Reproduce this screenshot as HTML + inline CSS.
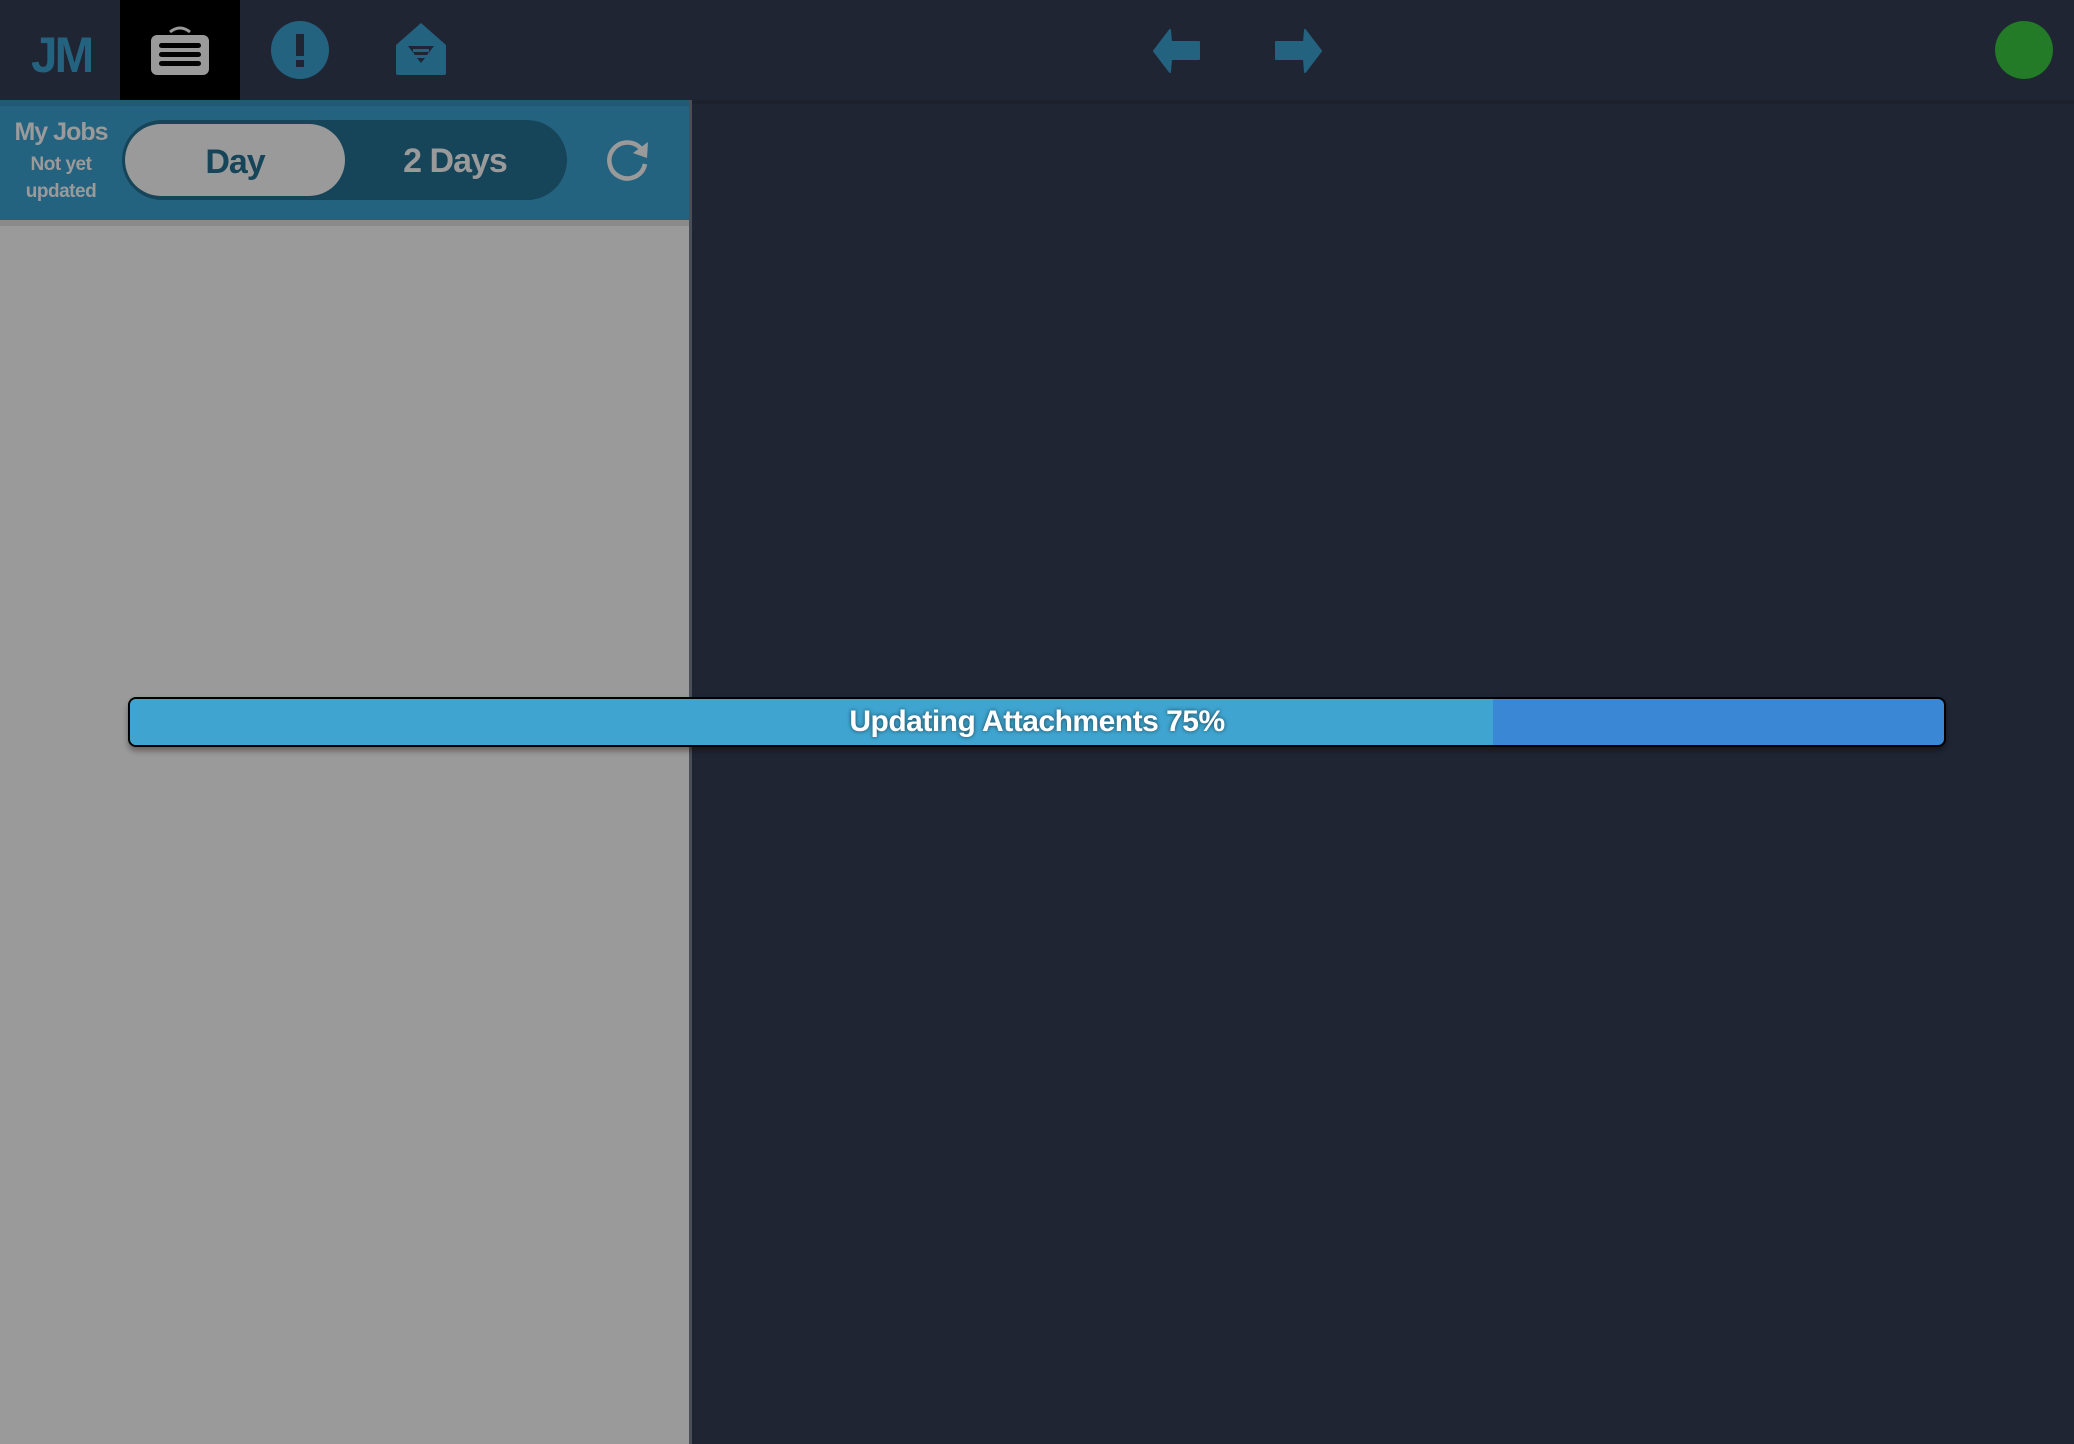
<!DOCTYPE html>
<html><head><meta charset="utf-8"><style>
*{margin:0;padding:0;box-sizing:border-box}
body{width:2074px;height:1444px;background:#1f2533;position:relative;overflow:hidden;font-family:"Liberation Sans",sans-serif}
.a{position:absolute}
</style></head><body>
<div class="a" style="left:0;top:0;width:2074px;height:100px;background:#1f2533"></div>
<div class="a" style="left:690px;top:100px;width:1384px;height:4px;background:#1c212d"></div>
<div class="a" style="left:120px;top:0;width:120px;height:100px;background:#000"></div>
<!-- JM logo -->
<div class="a" style="left:31px;top:26px;font-size:50px;font-weight:bold;color:#246380;letter-spacing:-3px;transform:scaleX(0.95);transform-origin:left">JM</div>
<!-- briefcase -->
<svg class="a" style="left:148px;top:22px" width="64" height="56" viewBox="0 0 64 56">
<path d="M22 10 Q32 2 42 10" stroke="#9a9a9a" stroke-width="3" fill="none"/>
<rect x="3" y="13" width="58" height="40" rx="6" fill="#9a9a9a"/>
<rect x="11" y="21" width="42" height="5" rx="2.5" fill="#000"/>
<rect x="11" y="30" width="42" height="5" rx="2.5" fill="#000"/>
<rect x="11" y="39" width="42" height="5" rx="2.5" fill="#000"/>
</svg>
<!-- alert -->
<svg class="a" style="left:271px;top:21px" width="58" height="58" viewBox="0 0 58 58">
<ellipse cx="29" cy="29" rx="29" ry="29" fill="#246380"/>
<rect x="25" y="13" width="8" height="22" fill="#1f2533"/>
<rect x="25" y="39" width="8" height="7" fill="#1f2533"/>
</svg>
<!-- envelope -->
<svg class="a" style="left:394px;top:21px" width="54" height="56" viewBox="0 0 54 56">
<path d="M2 24 L27 2 L52 24 L52 52 Q52 54 50 54 L4 54 Q2 54 2 52 Z" fill="#246380"/>
<path d="M14 25 L40 25 L33 34 L21 34 Z" fill="#1f2533"/>
<rect x="19" y="28" width="16" height="3" fill="#246380"/>
<path d="M23 37 L31 37 L27 42 Z" fill="#1f2533"/>
</svg>
<!-- arrows -->
<svg class="a" style="left:1152px;top:28px" width="50" height="46" viewBox="0 0 50 46">
<path d="M18 2 L2 23 L18 44 L19 31 L47 31 L47 14 L19 14 Z" fill="#246380" stroke="#246380" stroke-width="2" stroke-linejoin="round"/>
</svg>
<svg class="a" style="left:1273px;top:28px" width="50" height="46" viewBox="0 0 50 46">
<path d="M32 2 L48 23 L32 44 L31 31 L3 31 L3 14 L31 14 Z" fill="#246380" stroke="#246380" stroke-width="2" stroke-linejoin="round"/>
</svg>
<div class="a" style="left:1995px;top:21px;width:58px;height:58px;border-radius:50%;background:#237a27"></div>
<!-- left panel -->
<div class="a" style="left:0;top:100px;width:690px;height:120px;background:#246380"></div>
<div class="a" style="left:0;top:100px;width:690px;height:6px;background:#215a74"></div>
<div class="a" style="left:0;top:220px;width:690px;height:1224px;background:#9a9a9a"></div>
<div class="a" style="left:0;top:220px;width:690px;height:6px;background:#8a8a8a"></div>
<div class="a" style="left:689px;top:100px;width:3px;height:1344px;background:#4a4e58"></div>
<div class="a" style="left:0;top:118px;width:122px;text-align:center;color:#9a9a9a;font-weight:bold;font-size:25px;letter-spacing:-1px">My Jobs</div>
<div class="a" style="left:0;top:151px;width:122px;text-align:center;color:#9a9a9a;font-weight:bold;font-size:19px;line-height:27px;letter-spacing:-0.5px">Not yet<br>updated</div>
<div class="a" style="left:122px;top:120px;width:445px;height:80px;border-radius:40px;background:#164459"></div>
<div class="a" style="left:125px;top:124px;width:220px;height:72px;border-radius:36px;background:#9a9a9a"></div>
<div class="a" style="left:125px;top:143px;width:220px;text-align:center;color:#164459;font-weight:bold;font-size:34px;letter-spacing:-1px">Day</div>
<div class="a" style="left:345px;top:142px;width:220px;text-align:center;color:#9a9a9a;font-weight:bold;font-size:34px;letter-spacing:-1px">2 Days</div>
<svg class="a" style="left:604px;top:136px" width="48" height="48" viewBox="0 0 48 48">
<path d="M38 14 A18 18 0 1 0 41 28" stroke="#9a9a9a" stroke-width="4.5" fill="none"/>
<path d="M44 6 L43 22 L29 17 Z" fill="#9a9a9a"/>
</svg>
<!-- progress -->
<div class="a" style="left:128px;top:697px;width:1818px;height:50px;border:2px solid #000;border-radius:8px;background:#3a87d6;overflow:hidden;box-shadow:0 4px 6px rgba(0,0,0,0.35)">
<div style="width:1363px;height:100%;background:#3fa5d0"></div>
</div>
<div class="a" style="left:128px;top:705px;width:1818px;text-align:center;color:#fff;font-weight:bold;font-size:30px;letter-spacing:-0.5px;text-shadow:0 0 4px rgba(0,0,0,0.6)">Updating Attachments 75%</div>
</body></html>
